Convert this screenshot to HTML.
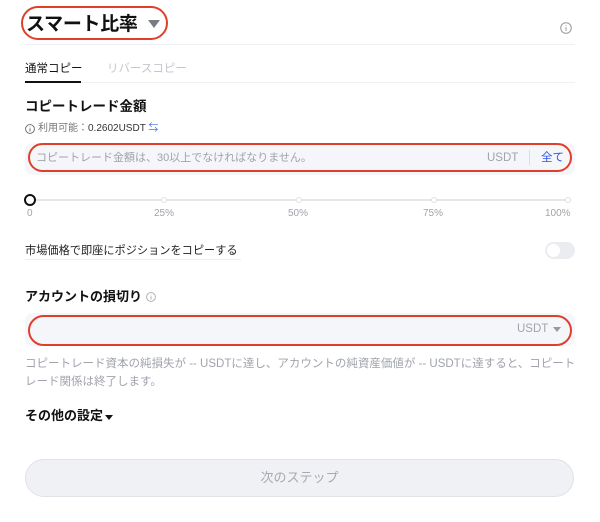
<!DOCTYPE html>
<html><head><meta charset="utf-8"><style>
*{margin:0;padding:0;box-sizing:border-box}
body{width:600px;height:522px;background:#fff;font-family:"Liberation Sans","Noto Sans CJK JP",sans-serif;color:#111;position:relative;overflow:hidden}
.a{position:absolute;white-space:nowrap}
.oval{position:absolute;border:2px solid #e0402a;border-radius:999px}
.gray{color:#a0a3ab}
</style></head><body>
<div class="a" style="left:26px;top:11px;font-size:19px;font-weight:bold;line-height:28px;letter-spacing:-0.3px">スマート比率</div>
<div class="a" style="left:148px;top:20px;width:0;height:0;border-left:6px solid transparent;border-right:6px solid transparent;border-top:8px solid #777b85"></div>
<div class="oval" style="left:21px;top:6px;width:147px;height:34px"></div>
<svg class="a" style="left:560px;top:22px" width="12" height="12" viewBox="0 0 12 12"><circle cx="6" cy="6" r="5.3" fill="none" stroke="#999" stroke-width="1"/><path d="M6 5v4M6 3.2v.8" stroke="#999" stroke-width="1"/></svg>
<div class="a" style="left:25px;top:44px;width:550px;height:1px;background:#f0f1f3"></div>
<div class="a" style="left:25px;top:61px;font-size:11.5px;line-height:16px">通常コピー</div>
<div class="a" style="left:107px;top:61px;font-size:11.5px;line-height:16px;color:#c4c6cc">リバースコピー</div>
<div class="a" style="left:25px;top:82px;width:550px;height:1px;background:#f0f1f3"></div>
<div class="a" style="left:25px;top:81px;width:56px;height:2px;background:#111"></div>
<div class="a" style="left:25px;top:97px;font-size:13.5px;font-weight:bold;line-height:20px">コピートレード金額</div>
<svg class="a" style="left:25px;top:124px" width="10" height="10" viewBox="0 0 10 10"><circle cx="5" cy="5" r="4.4" fill="none" stroke="#666" stroke-width=".9"/><path d="M5 4.2v3.3M5 2.6v.7" stroke="#666" stroke-width=".9"/></svg>
<div class="a" style="left:38px;top:122px;font-size:10px;line-height:14px;color:#333"><span style="color:#777">利用可能：</span>0.2602USDT <span style="color:#4a6ff0">⇆</span></div>
<div class="a" style="left:25px;top:143px;width:550px;height:32px;background:#f5f6fa;border-radius:8px"></div>
<div class="oval" style="left:28px;top:143px;width:544px;height:29px"></div>
<div class="a gray" style="left:36px;top:150px;font-size:11px;line-height:16px">コピートレード金額は、30以上でなければなりません。</div>
<div class="a gray" style="left:487px;top:150px;font-size:11.5px;line-height:16px">USDT</div>
<div class="a" style="left:529px;top:150px;width:1px;height:15px;background:#dcdde2"></div>
<div class="a" style="left:541px;top:150px;font-size:11.5px;line-height:16px;color:#2a55e5">全て</div>
<div class="a" style="left:30px;top:199px;width:540px;height:2px;background:#e4e6ea"></div>
<div class="a" style="left:161px;top:197px;width:6px;height:6px;border-radius:50%;background:#fff;border:1px solid #dfe1e6"></div>
<div class="a" style="left:296px;top:197px;width:6px;height:6px;border-radius:50%;background:#fff;border:1px solid #dfe1e6"></div>
<div class="a" style="left:431px;top:197px;width:6px;height:6px;border-radius:50%;background:#fff;border:1px solid #dfe1e6"></div>
<div class="a" style="left:565px;top:197px;width:6px;height:6px;border-radius:50%;background:#fff;border:1px solid #dfe1e6"></div>
<div class="a" style="left:24px;top:194px;width:12px;height:12px;border-radius:50%;background:#fff;border:2px solid #111"></div>
<div class="a gray" style="left:27px;top:207px;font-size:10px;line-height:13px">0</div>
<div class="a gray" style="left:154px;top:207px;font-size:10px;line-height:13px">25%</div>
<div class="a gray" style="left:288px;top:207px;font-size:10px;line-height:13px">50%</div>
<div class="a gray" style="left:423px;top:207px;font-size:10px;line-height:13px">75%</div>
<div class="a gray" style="left:545px;top:207px;font-size:10px;line-height:13px">100%</div>
<div class="a" style="left:25px;top:243px;font-size:11.2px;line-height:16px;color:#222">市場価格で即座にポジションをコピーする</div>
<div class="a" style="left:25px;top:259px;width:216px;height:1px;background:#eceef1"></div>
<div class="a" style="left:545px;top:242px;width:30px;height:17px;border-radius:9px;background:#ebecf0"></div>
<div class="a" style="left:547px;top:244px;width:13px;height:13px;border-radius:50%;background:#fff"></div>
<div class="a" style="left:25px;top:287px;font-size:13px;font-weight:bold;line-height:20px">アカウントの損切り</div>
<svg class="a" style="left:146px;top:292px" width="10" height="10" viewBox="0 0 10 10"><circle cx="5" cy="5" r="4.4" fill="none" stroke="#aaa" stroke-width=".9"/><path d="M5 4.2v3.3M5 2.6v.7" stroke="#aaa" stroke-width=".9"/></svg>
<div class="a" style="left:25px;top:313px;width:550px;height:33px;background:#f5f6fa;border-radius:8px"></div>
<div class="oval" style="left:28px;top:315px;width:544px;height:31px"></div>
<div class="a gray" style="left:517px;top:321px;font-size:11.5px;line-height:16px">USDT</div>
<div class="a" style="left:553px;top:327px;border-left:4px solid transparent;border-right:4px solid transparent;border-top:5px solid #999"></div>
<div class="a gray" style="left:25px;top:355px;font-size:11.5px;line-height:18px;white-space:normal;width:552px">コピートレード資本の純損失が -- USDTに達し、アカウントの純資産価値が -- USDTに達すると、コピート<br>レード関係は終了します。</div>
<div class="a" style="left:25px;top:406px;font-size:13px;font-weight:bold;line-height:20px">その他の設定</div>
<div class="a" style="left:105px;top:415px;border-left:4px solid transparent;border-right:4px solid transparent;border-top:5px solid #111"></div>
<div class="a" style="left:25px;top:459px;width:549px;height:38px;border-radius:19px;background:#f0f1f5;border:1px solid #e1e2e7;text-align:center;font-size:13px;line-height:36px;color:#a7a9b0">次のステップ</div>
</body></html>
